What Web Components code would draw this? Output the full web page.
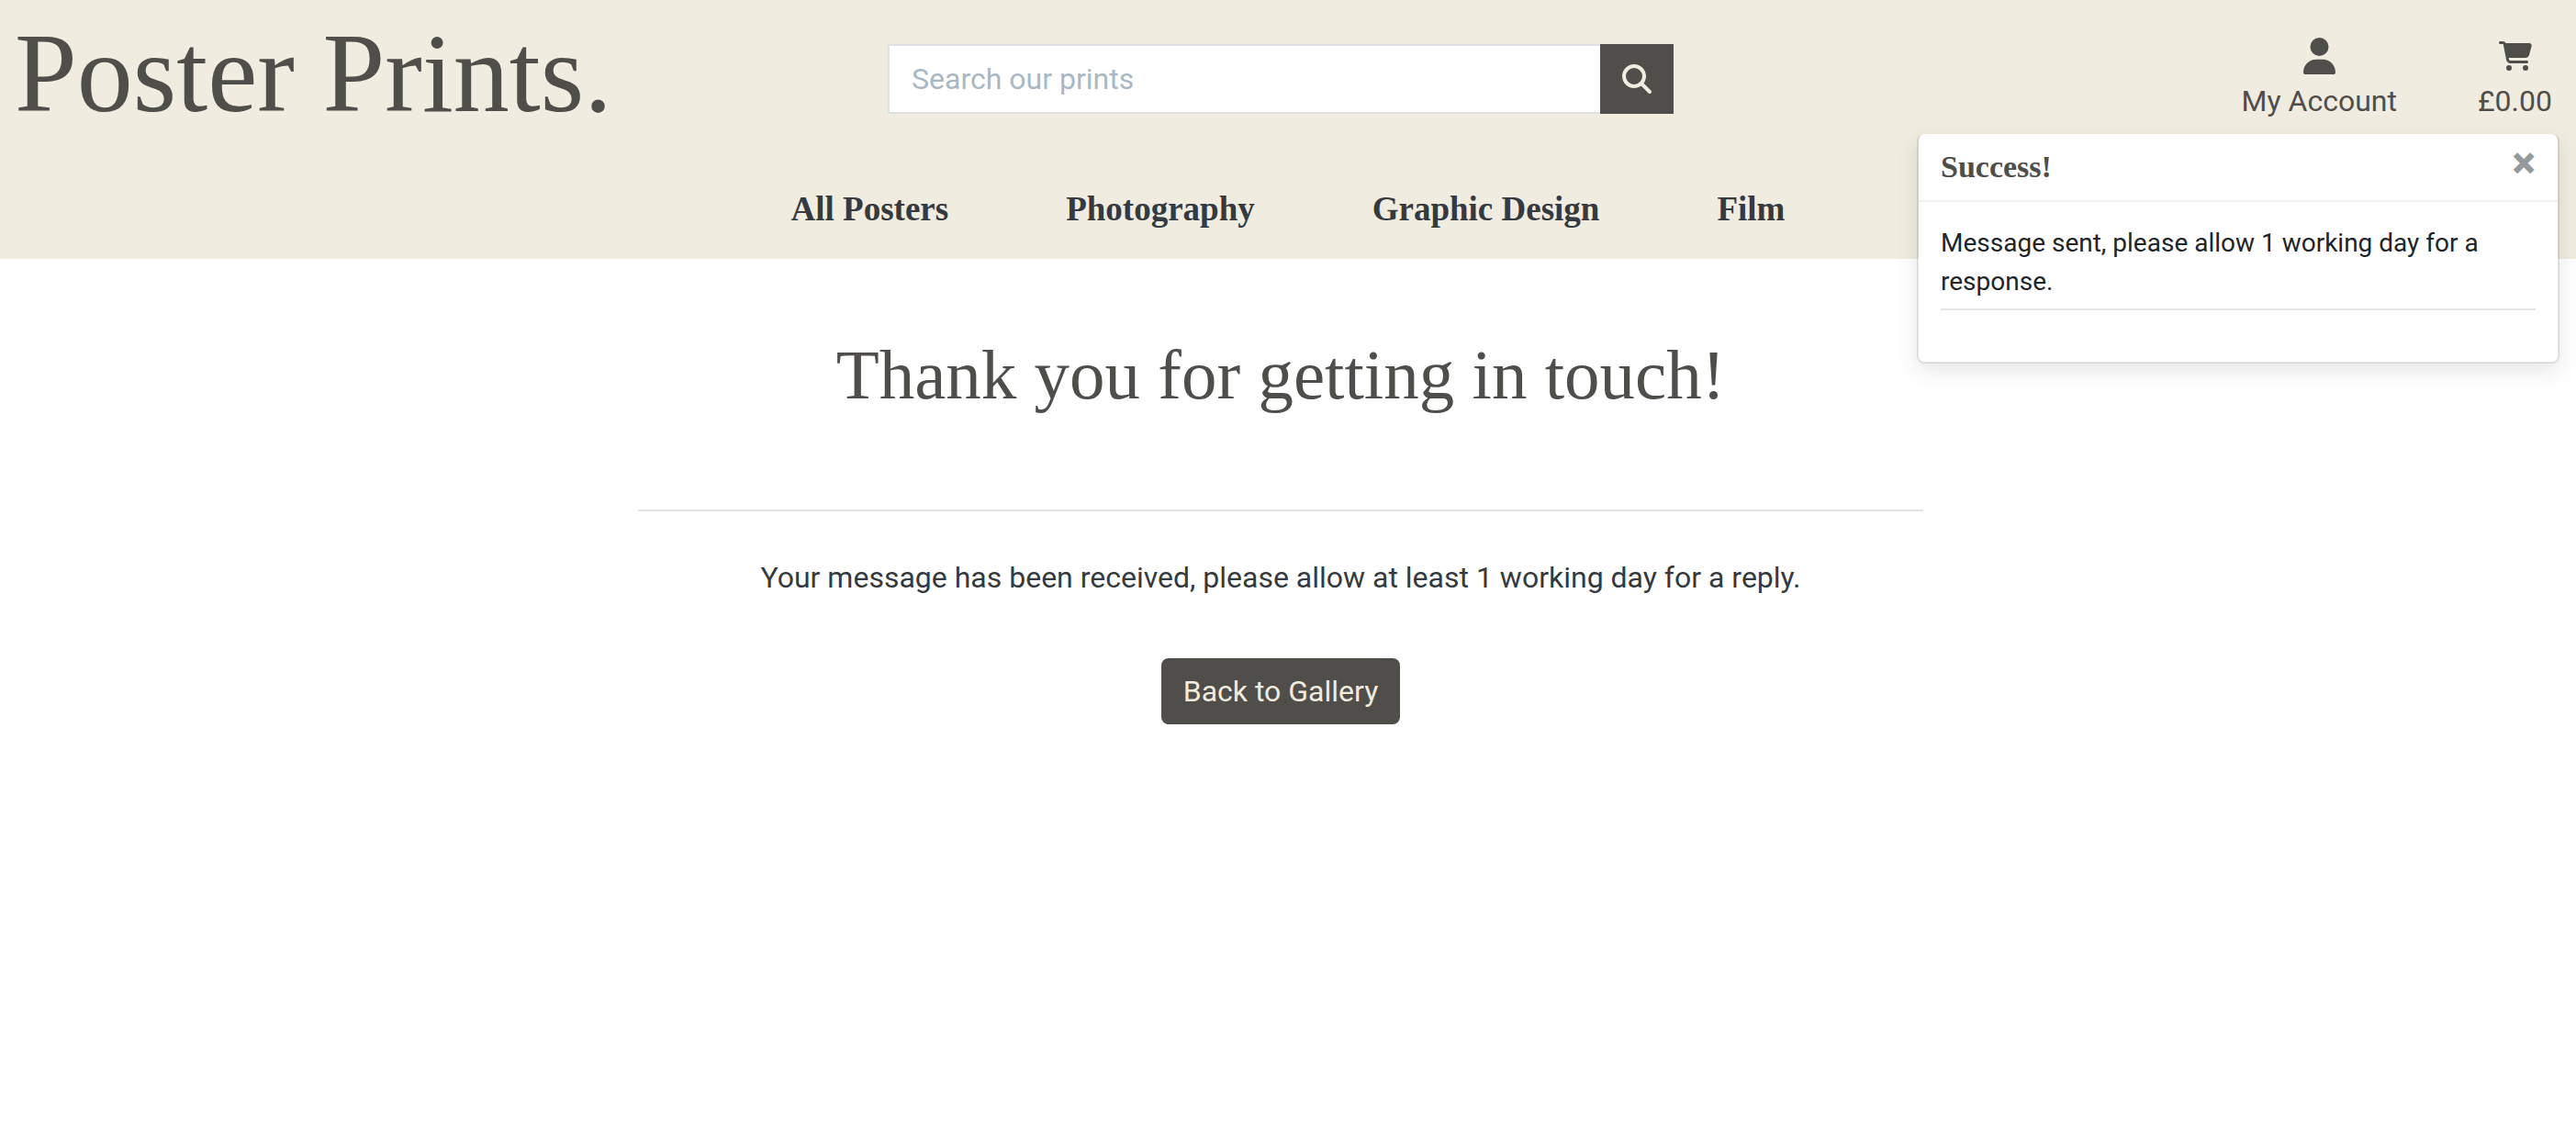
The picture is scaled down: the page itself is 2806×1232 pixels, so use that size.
<!DOCTYPE html>
<html lang="en">
<head>
<meta charset="utf-8">
<meta name="viewport" content="width=device-width, initial-scale=1">
<title>Poster Prints.</title>
<style>
  :root {
    --ink: #504e4b;
    --cream: #f0ecdf;
    --dark: #343a40;
    --serif: "Liberation Serif", serif;
  }
  body { margin: 0; background: #fff; color: var(--dark); font: 32px/48px Roboto, sans-serif; }
</style>
</head>
<body>
<poster-page>
  <site-header></site-header>
  <thank-you heading="Thank you for getting in touch!">
    Your message has been received, please allow at least 1 working day for a reply.
  </thank-you>
  <success-toast heading="Success!">Message sent, please allow 1 working day for a response.</success-toast>
</poster-page>

<script>
const icons = {
  search: ['0 0 512 512', 'M416 208c0 45.9-14.9 88.3-40 122.7L502.6 457.4c12.5 12.5 12.5 32.8 0 45.3s-32.8 12.5-45.3 0L330.7 376c-34.4 25.2-76.8 40-122.7 40C93.1 416 0 322.9 0 208S93.1 0 208 0S416 93.1 416 208zM208 352a144 144 0 1 0 0-288 144 144 0 1 0 0 288z'],
  user: ['0 0 448 512', 'M224 256A128 128 0 1 0 224 0a128 128 0 1 0 0 256zm-45.7 48C79.8 304 0 383.8 0 482.3C0 498.7 13.3 512 29.7 512H418.3c16.4 0 29.7-13.3 29.7-29.7C448 383.8 368.2 304 269.7 304H178.3z'],
  cart: ['0 0 576 512', 'M0 24C0 10.7 10.7 0 24 0H69.5c22 0 41.5 12.8 50.6 32h411c26.3 0 45.5 25 38.6 50.4l-41 152.3c-8.5 31.4-37 53.3-69.5 53.3H170.7l5.4 28.5c2.2 11.3 12.1 19.5 23.6 19.5H488c13.3 0 24 10.7 24 24s-10.7 24-24 24H199.7c-34.6 0-64.3-24.6-70.7-58.5L77.4 54.5c-.7-3.8-4-6.5-7.9-6.5H24C10.7 48 0 37.3 0 24zM128 464a48 48 0 1 1 96 0 48 48 0 1 1-96 0zm336-48a48 48 0 1 1 0 96 48 48 0 1 1 0-96z']
};

function define(name, render) {
  customElements.define(name, class extends HTMLElement {
    connectedCallback() {
      if (!this.shadowRoot) this.attachShadow({ mode: 'open' }).innerHTML = render(this);
    }
  });
}

define('poster-page', () => `
  <style>:host { display: block; position: relative; min-height: 100vh; }</style>
  <slot></slot>`);

define('app-icon', el => {
  const [box, path] = icons[el.getAttribute('name')];
  return `
  <style>
    :host { display: flex; align-items: center; justify-content: center; height: 40px; }
    svg { height: var(--icon-size, 32px); fill: currentColor; display: block; }
  </style>
  <svg viewBox="${box}" aria-hidden="true"><path d="${path}"/></svg>`;
});

define('search-box', () => `
  <style>
    :host { display: block; }
    form { display: flex; height: 76px; margin: 0; }
    input { flex: 1; min-width: 0; box-sizing: border-box; border: 2px solid #dee2e6; border-right: 0;
      border-radius: 0; background: #fff; padding: 0 24px; font: inherit; color: var(--dark); }
    input::placeholder { color: #aab7c4; opacity: 1; }
    button { width: 80px; border: 0; padding: 0; background: var(--ink); color: var(--cream); }
  </style>
  <form role="search">
    <input type="text" aria-label="Search our prints" placeholder="Search our prints">
    <button type="submit" aria-label="Search"><app-icon name="search"></app-icon></button>
  </form>`);

define('icon-link', el => `
  <style>
    :host { display: block; }
    a { display: flex; flex-direction: column; gap: 5px; color: var(--ink); text-decoration: none; text-align: center; }
  </style>
  <a href="#"><app-icon name="${el.getAttribute('icon')}"></app-icon><span><slot></slot></span></a>`);

define('site-header', () => `
  <style>
    :host { display: block; background: var(--cream); }
    .top { display: grid; grid-template-columns: 1fr minmax(0, 856px) 1fr; align-items: start; padding: 0 16px 0 0; }
    .brand { padding: 8px 16px; font: 122px/144px var(--serif); color: var(--ink); text-decoration: none; white-space: nowrap; }
    search-box { padding-top: 48px; }
    .links { display: flex; justify-content: flex-end; gap: 88px; padding: 41px 10px 0 0; }
    .account { --icon-size: 40px; }
    nav { display: flex; justify-content: center; gap: 128px; padding: 40px 0 26px; }
    nav a { font: bold 37px/56px var(--serif); color: var(--dark); text-decoration: none; }
  </style>
  <header>
    <div class="top">
      <a class="brand" href="#">Poster Prints.</a>
      <search-box></search-box>
      <div class="links">
        <icon-link class="account" icon="user">My Account</icon-link>
        <icon-link icon="cart">£0.00</icon-link>
      </div>
    </div>
    <nav aria-label="Categories">
      <a href="#">All Posters</a>
      <a href="#">Photography</a>
      <a href="#">Graphic Design</a>
      <a href="#">Film</a>
    </nav>
  </header>`);

define('thank-you', el => `
  <style>
    :host { display: block; padding: 80px 16px 0 0; }
    main { width: 50%; min-width: 1400px; margin: 0 auto; text-align: center; }
    @media (max-width: 1440px) { main { width: auto; min-width: 0; } }
    h1 { margin: 0; font: 77px/92px var(--serif); color: var(--ink); }
    hr { margin: 101px 0 48px; border: 0; border-top: 2px solid #e5e5e5; }
    p { margin: 0 0 64px; }
    a { display: inline-block; padding: 12px 24px; border-radius: 8px; background: var(--ink); color: var(--cream); text-decoration: none; }
  </style>
  <main>
    <h1>${el.getAttribute('heading')}</h1>
    <hr>
    <p><slot></slot></p>
    <a href="#">Back to Gallery</a>
  </main>`);

/* Notification floating over the header's lower right corner. */
define('success-toast', el => `
  <style>
    :host { display: block; position: absolute; top: 146px; right: 18px; width: 700px; box-sizing: border-box;
      border: 2px solid rgba(0,0,0,.1); border-top: 0; border-radius: 8px; background: #fff; background-clip: padding-box;
      box-shadow: 0 8px 24px rgba(0,0,0,.1); color: #212529; font-size: 28px; line-height: 42px; }
    header { display: flex; justify-content: space-between; align-items: flex-start; padding: 12px 24px; border-bottom: 2px solid #f0f0f0; }
    strong { font: bold 34px/48px var(--serif); color: var(--ink); }
    button { border: 0; padding: 0; background: none; color: #959a9d; font: 900 48px/40px Roboto, sans-serif; }
    .body { padding: 24px 24px 56px; }
    p { margin: 0 0 8px; }
    hr { margin: 0; border: 0; border-top: 2px solid #e5e5e5; }
  </style>
  <section role="status">
    <header><strong>${el.getAttribute('heading')}</strong><button type="button" aria-label="Close">×</button></header>
    <div class="body"><p><slot></slot></p><hr></div>
  </section>`);
</script>
</body>
</html>
